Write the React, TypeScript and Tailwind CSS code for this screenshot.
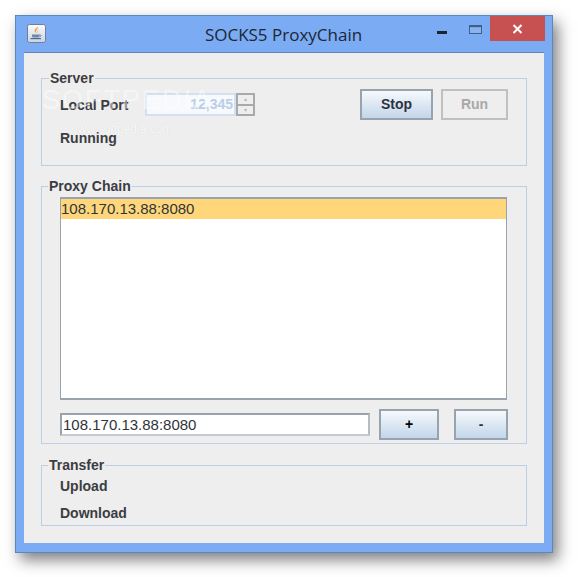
const sans = "font-['Liberation_Sans',Arial,sans-serif]";

function JavaIcon() {
  return (
    <svg width="19" height="19" viewBox="0 0 19 19" className="block">
      <defs>
        <linearGradient id="tile" x1="0" y1="0" x2="0" y2="1">
          <stop offset="0" stopColor="#fbfcfe" />
          <stop offset="1" stopColor="#c9d3e2" />
        </linearGradient>
      </defs>
      <rect x="0.5" y="0.5" width="18" height="18" rx="2" fill="url(#tile)" stroke="#6d7f99" />
      <path d="M10.5 2.5c1.5 2-2.5 3.5-1.5 5.5.4.8 1 1.2 1 1.2-2.2-.8-3-2.4-1.8-3.8 1-1.2 2.4-1.6 2.3-2.9z" fill="#ee8a2a" />
      <path d="M12.5 5.5c-1 .7-2 1.3-1.6 2.6.2.5.4.8.4 1-.9-.5-1.2-1.4-.8-2.2.3-.7 1.2-1 2-1.4z" fill="#f3a53f" />
      <path d="M5 10.5h7.5v1.4c0 1-.8 1.6-1.8 1.6H6.8c-1 0-1.8-.6-1.8-1.6z" fill="#6f8aa8" />
      <path d="M12.5 10.8c1.6-.4 2.2 1.4.2 2" fill="none" stroke="#5c7796" strokeWidth="0.9" />
      <path d="M3.5 14.6h10.5" stroke="#4f6a8a" strokeWidth="1.2" />
    </svg>
  );
}

function WindowControls() {
  return (
    <div className="flex items-start justify-end pr-[7px]">
      <svg width="10" height="3" viewBox="0 0 10 3" className="mt-[15px] mr-[22px] block">
        <rect width="10" height="3" fill="#1c2430" />
      </svg>
      <svg width="13" height="9" viewBox="0 0 13 9" className="mt-[9px] mr-[8px] block">
        <rect x="0.5" y="0.5" width="12" height="8" fill="#8ab4ee" stroke="#3f5f8e" />
        <rect x="1" y="1" width="11" height="1.2" fill="#3f5f8e" />
      </svg>
      <div className="flex h-[25px] w-[55px] items-center justify-center bg-[#c75050]">
        <svg width="11" height="10" viewBox="0 0 11 10">
          <path d="M1.5 1 9.5 9M9.5 1 1.5 9" stroke="#ffffff" strokeWidth="2" fill="none" />
        </svg>
      </div>
    </div>
  );
}

function Group({ title, className, legendClass, children }: { title: string; className: string; legendClass: string; children: React.ReactNode }) {
  return (
    <fieldset className={`mx-[17px] border border-[#bccfe4] ${className}`}>
      <legend className={`px-[1px] text-[14px] leading-[16px] font-bold text-[#3b3d42] ${legendClass}`}>{title}</legend>
      {children}
    </fieldset>
  );
}

function GradientButton({ label, className, disabled }: { label: string; className: string; disabled?: boolean }) {
  const look = disabled
    ? "border-[#c0c0c0] bg-[#eeeeee] text-[#a8a8a8]"
    : "border-[#98a3b0] bg-gradient-to-b from-[#f6f9fc] to-[#c3d6ea] text-[#2c3340]";
  return (
    <button className={`h-[31px] border-2 text-[14px] font-bold ${look} ${className}`}>{label}</button>
  );
}

function Spinner() {
  return (
    <div className="flex h-[23px] w-[110px]">
      <div className="flex w-[91px] items-center justify-end border-2 border-[#d3e0ef] bg-[#f7f9fc] pr-[1px] text-[14px] font-bold text-[#b9cfe6]">
        12,345
      </div>
      <div className="flex w-[19px] flex-col border-2 border-[#a9a9a9] bg-[#eeeeee]">
        <div className="flex flex-1 items-center justify-center border-b-2 border-[#a9a9a9] text-[6px] leading-none text-[#b5b5b5]">▴</div>
        <div className="flex flex-1 items-center justify-center text-[6px] leading-none text-[#b5b5b5]">▾</div>
      </div>
    </div>
  );
}

function Watermark() {
  return (
    <div className="pointer-events-none absolute top-[83px] left-[42px] flex flex-col text-white">
      <span className="text-[27px] leading-[34px] tracking-[2px] opacity-45">SOFTPEDIA</span>
      <span className="mt-[5px] ml-[27px] text-[12px] leading-[14px] opacity-60 [text-shadow:0_0_1px_#c9c9c9]">www.softpedia.com</span>
    </div>
  );
}

export default function App() {
  return (
    <div className={`relative h-[577px] w-[578px] overflow-hidden bg-white pt-[15px] pl-[15px] ${sans}`}>
      <div className="flex h-[538px] w-[538px] flex-col border border-[#5f86ba] bg-[#7aabf3] shadow-[5px_7px_14px_rgba(0,0,0,0.5)]">
        <div className="grid h-[36px] grid-cols-[1fr_auto_1fr]">
          <div className="pt-[8px] pl-[11px]">
            <JavaIcon />
          </div>
          <div className="-ml-[1px] flex items-center pt-[1px] font-['Open_Sans',sans-serif] text-[17px] text-[#1c2736]">SOCKS5 ProxyChain</div>
          <WindowControls />
        </div>

        <div className="mx-[8px] flex h-[491px] flex-col border-t border-[#5f86ba] bg-[#eeeeee] pt-[17px]">
          <Group title="Server" className="h-[96px]" legendClass="ml-[7px]">
            <div className="flex justify-between pt-[3px] pr-[18px] pl-[18px]">
              <div className="flex flex-col">
                <div className="flex items-center gap-[15px] pt-[4px]">
                  <span className="w-[70px] pt-[1px] text-[14px] font-bold text-[#3b3d42]">Local Port</span>
                  <Spinner />
                </div>
                <span className="mt-[14px] text-[14px] leading-[16px] font-bold text-[#3b3d42]">Running</span>
              </div>
              <div className="flex gap-[8px]">
                <GradientButton label="Stop" className="w-[73px]" />
                <GradientButton label="Run" className="w-[67px]" disabled />
              </div>
            </div>
          </Group>

          <Group title="Proxy Chain" className="mt-[12px] h-[266px]" legendClass="ml-[6px]">
            <div className="flex flex-col px-[18px] pt-[3px]">
              <div className="mr-[1px] h-[203px] border-t-2 border-r border-b-2 border-l border-[#9aa3ad] bg-white">
                <div className="h-[20px] bg-[#ffd77a] text-[15px] leading-[20px] text-[#30343a]">108.170.13.88:8080</div>
              </div>
              <div className="mt-[9px] flex items-start">
                <div className="mt-[4px] h-[23px] w-[310px] border-2 border-[#9aa3ad] border-r-[#b5bcc4] border-b-[#c4cad1] bg-white pl-[1px] text-[15px] leading-[20px] text-[#30343a]">
                  108.170.13.88:8080
                </div>
                <GradientButton label="+" className="ml-[9px] w-[60px] text-black" />
                <GradientButton label="-" className="ml-[15px] w-[54px]" />
              </div>
            </div>
          </Group>

          <Group title="Transfer" className="mt-[13px] h-[69px]" legendClass="ml-[6px]">
            <div className="flex flex-col gap-[11px] pt-[5px] pl-[18px] text-[14px] leading-[16px] font-bold text-[#3b3d42]">
              <span>Upload</span>
              <span>Download</span>
            </div>
          </Group>
        </div>
      </div>
      <Watermark />
    </div>
  );
}
